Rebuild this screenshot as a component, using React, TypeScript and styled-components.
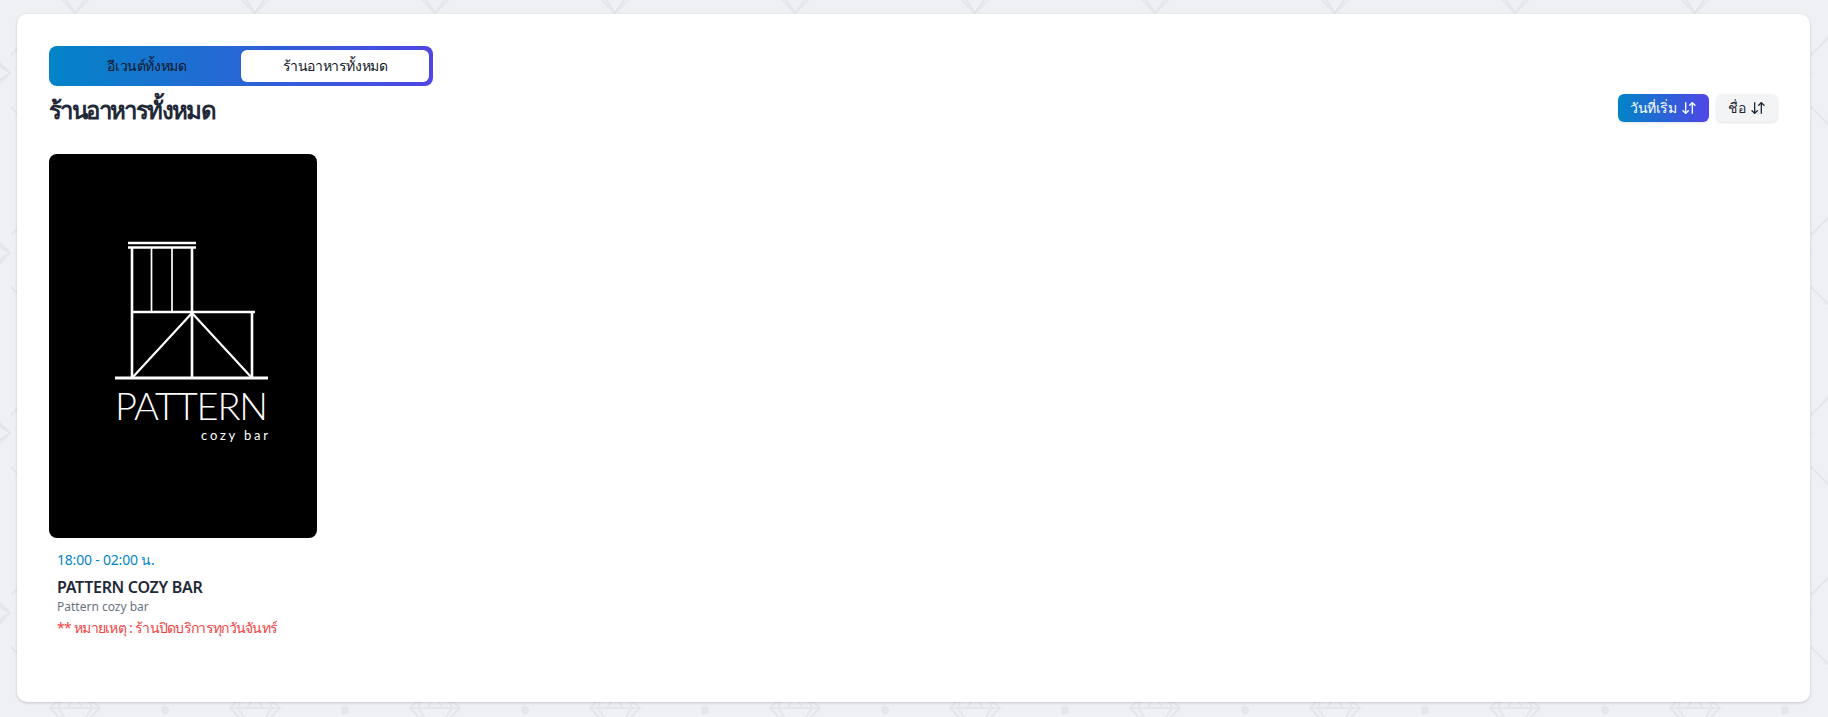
import { ArrowDownUp } from 'lucide-react';
import styled, { createGlobalStyle } from 'styled-components';

// 180px tile with the faint diamonds behind the card
const patternTile = encodeURIComponent(`<svg xmlns="http://www.w3.org/2000/svg" width="180" height="180" viewBox="0 0 180 180">
<defs>
<g id="gem">
<path d="M-13 -11h26l12 11-25 25-25-25zM-25 0h50M-13 -11l-4 11 17 25 17-25-4-11M0 -11l-8 11M0 -11l8 11"/>
</g>
</defs>
<g fill="none" stroke="#e4e6eb" stroke-width="2">
<use href="#gem" x="75" y="168"/>
<use href="#gem" x="75" y="-12"/>
<use href="#gem" transform="translate(-15 73) rotate(-90)"/>
<use href="#gem" transform="translate(165 73) rotate(-90)"/>
<path d="M11 55l30-30M11 107l30 30"/>
</g>
<circle cx="165" cy="170" r="4" fill="#e4e6eb"/>
</svg>`);

const GlobalStyle = createGlobalStyle`
  html, body {
    margin: 0;
    padding: 0;
    overflow: hidden;
  }
  body {
    font-family: "Noto Sans", "Noto Sans CJK SC", "Liberation Sans", sans-serif;
    background-color: #eef0f4;
    background-image: url("data:image/svg+xml,${patternTile}");
    background-size: 180px 180px;
  }
`;

const Page = styled.div`
  box-sizing: border-box;
  height: 717px;
  padding: 14px 18px 15px 17px;
`;

const Card = styled.main`
  box-sizing: border-box;
  height: 100%;
  padding: 32px 32px 0;
  background: #fff;
  border-radius: 10px;
  box-shadow: 0 1px 3px rgba(15, 23, 42, 0.18);
`;

const Tabs = styled.div`
  display: grid;
  grid-template-columns: 1fr 1fr;
  box-sizing: border-box;
  width: 384px;
  height: 40px;
  padding: 4px;
  border-radius: 8px;
  background: linear-gradient(90deg, #0284c7, #4f46e5);
`;

const Tab = styled.button<{ $active?: boolean }>`
  border: 0;
  border-radius: 6px;
  padding: 0;
  font: inherit;
  font-size: 14px;
  letter-spacing: -0.4px;
  color: #111827;
  background: ${(p) => (p.$active ? '#fff' : 'transparent')};
`;

const HeaderRow = styled.div`
  display: flex;
  align-items: center;
  justify-content: space-between;
  height: 48px;
  margin-bottom: 20px;
`;

const Heading = styled.h1`
  margin: 0;
  font-size: 24px;
  font-weight: 600;
  letter-spacing: -1.6px;
  color: #1f2937;
`;

const SortGroup = styled.div`
  display: flex;
  gap: 7px;
  margin-bottom: 4px;
`;

const SortButton = styled.button<{ $active?: boolean }>`
  display: flex;
  align-items: center;
  gap: 5px;
  height: 28px;
  padding: 0 12px;
  border: 0;
  border-radius: 6px;
  font: inherit;
  font-size: 14px;
  letter-spacing: -0.5px;
  color: ${(p) => (p.$active ? '#fff' : '#1f2937')};
  background: ${(p) =>
    p.$active ? 'linear-gradient(90deg, #0284c7, #4f46e5)' : '#f3f4f6'};
  box-shadow: 0 1px 2px rgba(15, 23, 42, 0.12);
`;

const EventCard = styled.article`
  width: 268px;
`;

const Poster = styled.div`
  height: 384px;
  border-radius: 8px;
  background: #000;
  overflow: hidden;
  svg {
    display: block;
  }
`;

const CardBody = styled.div`
  padding: 12px 8px 0;
`;

const Time = styled.div`
  font-size: 14px;
  line-height: 20px;
  letter-spacing: -0.2px;
  color: #0284c7;
`;

const Title = styled.h2`
  margin: 5px 0 0;
  font-size: 16px;
  line-height: 24px;
  font-weight: 600;
  letter-spacing: -0.3px;
  color: #1f2937;
`;

const Subtitle = styled.div`
  font-size: 12px;
  line-height: 16px;
  color: #6b7280;
`;

const Note = styled.div`
  margin-top: 3px;
  font-size: 14px;
  line-height: 20px;
  letter-spacing: -0.7px;
  color: #ef4444;
`;

const PatternLogo = () => (
  <svg width="268" height="384" viewBox="49 154 268 384">
    <g fill="none" stroke="#fff" strokeWidth="2.6">
      <path d="M128 243h68M128 247.500h68" strokeWidth="2.600" />
      <path d="M132 247v131M192 247v131M132 312h123M252 312v66" />
      <path d="M151.500 247v65M172 247v65" strokeWidth="1.700" />
      <path d="M192 313l-60 65M192 313l60 65" strokeWidth="2.200" />
      <path d="M115 378h153" strokeWidth="3" />
    </g>
    <text
      x="115"
      y="420"
      fontFamily="Lato, sans-serif"
      fontWeight="300"
      fontSize="38"
      fill="#fff"
      textLength="153"
      lengthAdjust="spacing"
    >
      PATTERN
    </text>
    <text
      x="201"
      y="440"
      fontFamily="Lato, sans-serif"
      fontWeight="400"
      fontSize="13"
      fill="#fff"
      textLength="67"
      lengthAdjust="spacing"
    >
      cozy bar
    </text>
  </svg>
);

export default function App() {
  return (
    <>
      <GlobalStyle />
      <Page>
        <Card>
          <Tabs>
            <Tab>อีเวนต์ทั้งหมด</Tab>
            <Tab $active>ร้านอาหารทั้งหมด</Tab>
          </Tabs>
          <HeaderRow>
            <Heading>ร้านอาหารทั้งหมด</Heading>
            <SortGroup>
              <SortButton $active>
                วันที่เริ่ม <ArrowDownUp size={16} />
              </SortButton>
              <SortButton>
                ชื่อ <ArrowDownUp size={16} />
              </SortButton>
            </SortGroup>
          </HeaderRow>
          <EventCard>
            <Poster>
              <PatternLogo />
            </Poster>
            <CardBody>
              <Time>18:00 - 02:00 น.</Time>
              <Title>PATTERN COZY BAR</Title>
              <Subtitle>Pattern cozy bar</Subtitle>
              <Note>** หมายเหตุ : ร้านปิดบริการทุกวันจันทร์</Note>
            </CardBody>
          </EventCard>
        </Card>
      </Page>
    </>
  );
}
